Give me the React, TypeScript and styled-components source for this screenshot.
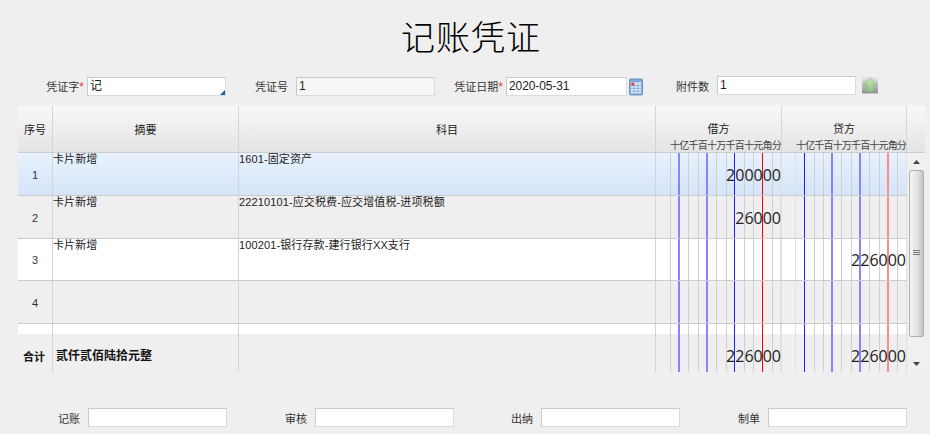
import styled, { createGlobalStyle } from 'styled-components';

const CJK = `"Liberation Sans", "Noto Sans CJK SC", sans-serif`;

const GlobalStyle = createGlobalStyle`
  html, body {
    margin: 0;
    background: #efefef;
  }
  body {
    font-family: ${CJK};
    font-size: 11px;
    color: #222;
  }
  * {
    box-sizing: border-box;
  }
`;

const Page = styled.div`
  width: 930px;
  height: 434px;
  padding-top: 17px;
  overflow: hidden;
`;

const Title = styled.h1`
  margin: 0;
  height: 42px;
  padding-left: 12px;
  font-size: 34px;
  line-height: 42px;
  font-weight: 300;
  text-align: center;
  letter-spacing: 1px;
  color: #000;
`;

const FormRow = styled.div`
  display: flex;
  margin: 17px 0 0 18px;
  height: 20px;
`;

const FooterRow = styled(FormRow)`
  margin-top: 36px;
  height: 19px;
`;

const Field = styled.div<{ $width: number; $gap?: number }>`
  display: flex;
  align-items: center;
  justify-content: flex-end;
  width: ${(p) => p.$width}px;
  gap: ${(p) => p.$gap ?? 8}px;
`;

const Label = styled.label`
  color: #333;
  white-space: nowrap;
`;

const Required = styled.span`
  color: #e33;
  font-size: 12px;
`;

const Box = styled.div<{ $width: number; $readOnly?: boolean; $raised?: boolean }>`
  position: relative;
  width: ${(p) => p.$width}px;
  height: 19px;
  margin-bottom: ${(p) => (p.$raised ? 2 : 0)}px;
  padding-left: 2px;
  font-size: 12px;
  line-height: 16px;
  letter-spacing: -0.1px;
  color: #222;
  background: ${(p) => (p.$readOnly ? '#f6f6f6' : '#fff')};
  border: 1px solid #c6ccd4;
  border-right-color: #d8dce0;
  border-bottom-color: #d8dce0;
`;

const Corner = styled.span`
  position: absolute;
  right: 0;
  bottom: 0;
  border-style: solid;
  border-width: 0 0 5px 5px;
  border-color: transparent transparent #1f5c9e transparent;
`;

const Table = styled.div`
  margin: 10px 0 0 18px;
  width: 907px;
  height: 266px;
`;

const Columns = styled.div`
  display: grid;
  grid-template-columns: 35px 186px 417px 126px 125px 18px;
`;

const Header = styled(Columns)`
  height: 47px;
  background: linear-gradient(#f8f8f8, #e4e4e4);
  border-bottom: 1px solid #ccc;
`;

const HeadCell = styled.div`
  display: flex;
  align-items: center;
  justify-content: center;
  color: #222;
  border-right: 1px solid #d4d4d4;
`;

const MoneyHead = styled.div`
  display: flex;
  flex-direction: column;
  align-items: stretch;
  padding-top: 16px;
  border-right: 1px solid #d4d4d4;
`;

const MoneyTitle = styled.div`
  text-align: center;
  line-height: 14px;
  color: #222;
`;

const UnitRow = styled.div`
  display: grid;
  grid-template-columns: repeat(12, minmax(0, 1fr));
  margin-top: 5px;
  padding-left: 14px;
  font-size: 10px;
  line-height: 10px;
  text-align: center;
  white-space: nowrap;
  color: #444;
`;

const BodyWrap = styled.div`
  display: flex;
  height: 219px;
`;

const Rows = styled.div`
  width: 889px;
`;

const rowBackground = {
  active: 'linear-gradient(#e9f2fe, #d5e4f9)',
  gray: '#efefef',
  white: '#fff',
};

const Row = styled(Columns)<{ $height: number; $tone: keyof typeof rowBackground; $line?: boolean }>`
  grid-template-columns: 35px 186px 417px 126px 125px;
  height: ${(p) => p.$height}px;
  background: ${(p) => rowBackground[p.$tone]};
  border-bottom: ${(p) => (p.$line ? '1px solid #cbcbcb' : 'none')};
`;

const SeqCell = styled.div`
  display: flex;
  align-items: center;
  justify-content: center;
  padding-top: 1px;
  font-size: 11px;
  color: #333;
  border-right: 1px solid #d4d4d4;
`;

const TextCell = styled.div`
  line-height: 12px;
  letter-spacing: 0.12px;
  white-space: nowrap;
  color: #222;
  border-right: 1px solid #d4d4d4;
`;

const TotalLabel = styled(SeqCell)`
  padding: 6px 2px 0 0;
  font-weight: 700;
  color: #111;
`;

const TotalWords = styled(TextCell)`
  display: flex;
  align-items: center;
  padding: 6px 0 0 3px;
  font-size: 12px;
  letter-spacing: 0;
  font-weight: 700;
  color: #111;
`;

const MoneyCell = styled.div`
  position: relative;
  display: flex;
`;

const toneColor = {
  plain: '#cfcfcf',
  light: '#e0e0e0',
  blue: '#1f1fff',
  soft: '#8585ff',
  red: '#ff0000',
  pink: '#ff8a8a',
};

const Tick = styled.i<{ $width: number; $tone: keyof typeof toneColor; $thick?: boolean }>`
  display: block;
  flex: none;
  width: ${(p) => p.$width}px;
  box-shadow: inset ${(p) => (p.$thick ? -2 : -1)}px 0 0 ${(p) => toneColor[p.$tone]};
`;

const Amount = styled.span<{ $lower?: boolean }>`
  position: absolute;
  right: 1px;
  top: ${(p) => (p.$lower ? 6 : 1)}px;
  bottom: 0;
  display: flex;
  align-items: center;
  font-family: "Open Sans", sans-serif;
  font-size: 16px;
  color: #222;
`;

const ScrollTrack = styled.div`
  position: relative;
  display: flex;
  flex-direction: column;
  align-items: center;
  width: 18px;
  background: #f0f0f0;
`;

const ArrowBox = styled.div`
  display: flex;
  align-items: center;
  justify-content: center;
  width: 18px;
  height: 17px;
`;

const Thumb = styled.div`
  display: flex;
  flex-direction: column;
  align-items: center;
  justify-content: center;
  gap: 1px;
  width: 15px;
  height: 167px;
  padding-bottom: 2px;
  background: linear-gradient(90deg, #f4f4f4, #e4e4e4 55%, #c4c4c4);
  border: 1px solid #b0b0b0;
  border-radius: 2px;
`;

const Grip = styled.span`
  width: 7px;
  height: 1px;
  background: #777;
`;

const Spacer = styled.div`
  flex: 1;
`;

const CalendarSlot = styled.div`
  display: flex;
  align-items: center;
  width: 16px;
  padding-left: 2px;
  margin-top: 1px;
`;

const UploadSlot = styled.div`
  display: flex;
  align-items: flex-start;
  width: 22px;
  padding-left: 6px;
  margin-top: -1px;
`;

type Line = [number, keyof typeof toneColor, boolean?];

const debitTicks: Line[] = [
  [15, 'plain'], [9, 'soft', true], [9, 'plain'], [10, 'plain'], [9, 'soft', true], [9, 'plain'],
  [10, 'plain'], [8, 'blue'], [10, 'plain'], [9, 'plain'], [9, 'red'], [10, 'plain'], [9, 'light', true],
];

const creditTicks: Line[] = [
  [14, 'light'], [9, 'blue'], [10, 'plain'], [9, 'plain'], [9, 'soft', true], [9, 'plain'],
  [10, 'plain'], [9, 'soft', true], [9, 'plain'], [10, 'plain'], [9, 'pink', true], [9, 'plain'], [9, 'light'],
];

const units = ['十', '亿', '千', '百', '十', '万', '千', '百', '十', '元', '角', '分'];

function Money({ ticks, value, lower }: { ticks: Line[]; value?: string; lower?: boolean }) {
  return (
    <MoneyCell>
      {ticks.map(([width, tone, thick], i) => (
        <Tick key={i} $width={width} $tone={tone} $thick={thick} />
      ))}
      {value && <Amount $lower={lower}>{value}</Amount>}
    </MoneyCell>
  );
}

const entries = [
  { no: '1', summary: '卡片新增', subject: '1601-固定资产', debit: '200000', tone: 'active', height: 43 },
  { no: '2', summary: '卡片新增', subject: '22210101-应交税费-应交增值税-进项税额', debit: '26000', tone: 'gray', height: 43 },
  { no: '3', summary: '卡片新增', subject: '100201-银行存款-建行银行XX支行', credit: '226000', tone: 'white', height: 42 },
  { no: '4', summary: '', subject: '', tone: 'gray', height: 43 },
] as const;

function MoneyHeader({ title }: { title: string }) {
  return (
    <MoneyHead>
      <MoneyTitle>{title}</MoneyTitle>
      <UnitRow>
        {units.map((u, i) => (
          <span key={i}>{u}</span>
        ))}
      </UnitRow>
    </MoneyHead>
  );
}

function CalendarIcon() {
  return (
    <svg width="15" height="18" viewBox="0 0 15 18">
      <rect x="0.5" y="0.5" width="14" height="17" rx="1" fill="#7fa8d6" stroke="#5f8dc0" />
      <rect x="2" y="4" width="11" height="12" fill="#dce9f7" />
      <path d="M2 7.5h11M2 10.5h11M2 13.5h11M5.5 4v12M9.5 4v12" stroke="#8fb3da" strokeWidth="1" fill="none" />
      <rect x="2.5" y="4.5" width="3" height="3" fill="#ec3a34" />
    </svg>
  );
}

function UploadIcon() {
  return (
    <svg width="17" height="19" viewBox="0 0 17 19">
      <defs>
        <linearGradient id="upload-bg" x1="0" y1="0" x2="0" y2="1">
          <stop offset="0" stopColor="#f2f2f2" />
          <stop offset="1" stopColor="#8f8f8f" />
        </linearGradient>
        <linearGradient id="upload-arrow" x1="0" y1="0" x2="0" y2="1">
          <stop offset="0" stopColor="#c9e6bd" />
          <stop offset="1" stopColor="#8ec47f" />
        </linearGradient>
      </defs>
      <rect width="17" height="19" fill="url(#upload-bg)" />
      <path d="M8.5 2 16 9.5h-4V17H5V9.5H1Z" fill="url(#upload-arrow)" stroke="#86ad7c" strokeWidth="0.6" />
    </svg>
  );
}

export default function App() {
  return (
    <Page>
      <GlobalStyle />
      <Title>记账凭证</Title>

      <FormRow>
        <Field $width={208} $gap={3}>
          <Label>
            凭证字<Required>*</Required>
          </Label>
          <Box $width={139}>
            记<Corner />
          </Box>
        </Field>
        <Field $width={209}>
          <Label>凭证号</Label>
          <Box $width={139} $readOnly>1</Box>
        </Field>
        <Field $width={192} $gap={3}>
          <Label>
            凭证日期<Required>*</Required>
          </Label>
          <Box $width={121}>2020-05-31</Box>
        </Field>
        <CalendarSlot>
          <CalendarIcon />
        </CalendarSlot>
        <Field $width={213}>
          <Label>附件数</Label>
          <Box $width={139} $raised>1</Box>
        </Field>
        <UploadSlot>
          <UploadIcon />
        </UploadSlot>
      </FormRow>

      <Table>
        <Header>
          <HeadCell>序号</HeadCell>
          <HeadCell>摘要</HeadCell>
          <HeadCell>科目</HeadCell>
          <MoneyHeader title="借方" />
          <MoneyHeader title="贷方" />
          <div />
        </Header>
        <BodyWrap>
          <Rows>
            {entries.map((e) => {
              const row = e as { debit?: string; credit?: string };
              return (
                <Row key={e.no} $height={e.height} $tone={e.tone} $line>
                  <SeqCell>{e.no}</SeqCell>
                  <TextCell>{e.summary}</TextCell>
                  <TextCell>{e.subject}</TextCell>
                  <Money ticks={debitTicks} value={row.debit} />
                  <Money ticks={creditTicks} value={row.credit} />
                </Row>
              );
            })}
            <Row $height={10} $tone="white">
              <SeqCell />
              <TextCell />
              <TextCell />
              <Money ticks={debitTicks} />
              <Money ticks={creditTicks} />
            </Row>
            <Row $height={38} $tone="gray">
              <TotalLabel>合计</TotalLabel>
              <TotalWords>贰仟贰佰陆拾元整</TotalWords>
              <TextCell />
              <Money ticks={debitTicks} value="226000" lower />
              <Money ticks={creditTicks} value="226000" lower />
            </Row>
          </Rows>
          <ScrollTrack>
            <ArrowBox>
              <svg width="7" height="4" viewBox="0 0 7 4">
                <path d="M3.5 0 7 4H0Z" fill="#444" />
              </svg>
            </ArrowBox>
            <Thumb>
              <Grip />
              <Grip />
              <Grip />
            </Thumb>
            <Spacer />
            <ArrowBox>
              <svg width="7" height="4" viewBox="0 0 7 4">
                <path d="M0 0H7L3.5 4Z" fill="#444" />
              </svg>
            </ArrowBox>
          </ScrollTrack>
        </BodyWrap>
      </Table>

      <FooterRow>
        <Field $width={209}>
          <Label>记账</Label>
          <Box $width={139} />
        </Field>
        <Field $width={227}>
          <Label>审核</Label>
          <Box $width={139} />
        </Field>
        <Field $width={226}>
          <Label>出纳</Label>
          <Box $width={139} />
        </Field>
        <Field $width={227}>
          <Label>制单</Label>
          <Box $width={139} />
        </Field>
      </FooterRow>
    </Page>
  );
}
